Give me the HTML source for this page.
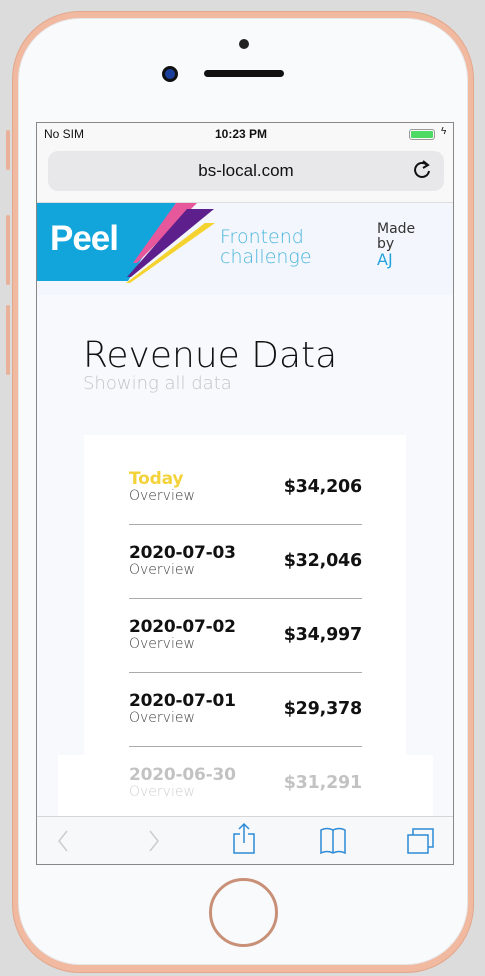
<!DOCTYPE html>
<html><head><meta charset="utf-8"><style>
*{margin:0;padding:0;box-sizing:border-box}
body{width:485px;height:976px;background:#dcdcdc;position:relative;overflow:hidden;font-family:"Liberation Sans",sans-serif}
.phone{position:absolute;left:12px;top:11px;width:462px;height:962px;border-radius:68px;background:#f0b9a0;border:1px solid #e2a88e}
.inner{position:absolute;left:5px;top:6px;right:5px;bottom:7px;border-radius:62px;background:#f9fafc;border:1px solid #e6e7ea}
.btn{position:absolute;left:6px;width:4px;background:#eab19a;border-radius:2px}
.abs{position:absolute}
.screen{position:absolute;left:36px;top:122px;width:418px;height:743px;background:#f8f9fd;border:1px solid #888;overflow:hidden}
.row{position:absolute;left:92px;width:233px}
.d{position:absolute;left:0;font-weight:bold;font-size:17px;color:#111;font-family:"DejaVu Sans",sans-serif;letter-spacing:-0.2px}
.o{position:absolute;left:0;font-size:14px;color:#444;font-family:"DejaVu Sans",sans-serif;font-weight:300}
.a{position:absolute;right:0;font-weight:bold;font-size:17.5px;color:#111;font-family:"DejaVu Sans",sans-serif;letter-spacing:-0.2px}
.ln{position:absolute;left:0;width:233px;height:1px;background:#aaa}
</style></head><body>
<div class="btn" style="top:130px;height:40px"></div>
<div class="btn" style="top:215px;height:70px"></div>
<div class="btn" style="top:305px;height:70px"></div>
<div class="phone"><div class="inner"></div></div>
<div class="abs" style="left:239px;top:39px;width:10px;height:10px;border-radius:50%;background:#222"></div>
<div class="abs" style="left:162px;top:66px;width:16px;height:16px;border-radius:50%;background:#1a3f9a;border:3px solid #111"></div>
<div class="abs" style="left:204px;top:70px;width:80px;height:7px;border-radius:4px;background:#111"></div>
<div class="screen">
 <div class="abs" style="left:0;top:0;width:418px;height:80px;background:#f8f8f8;border-bottom:1px solid #ddd"></div>
 <div class="abs" style="left:7px;top:4px;font-size:12px;color:#111">No SIM</div>
 <div class="abs" style="left:178px;top:4px;font-size:12px;font-weight:bold;color:#111">10:23 PM</div>
 <div class="abs" style="left:372px;top:6px;width:26px;height:11px;border:1px solid #999;border-radius:3px;padding:1px"><div style="width:100%;height:100%;background:#4cd964;border-radius:1px"></div></div>
 <div class="abs" style="left:404px;top:3px;font-size:10px;color:#111">ϟ</div>
 <div class="abs" style="left:11px;top:28px;width:396px;height:40px;background:#e8e8ea;border-radius:10px"></div>
 <div class="abs" style="left:0;top:38px;width:418px;text-align:center;font-size:17px;color:#111">bs-local.com</div>
 <svg class="abs" style="left:377px;top:37px" width="18" height="20" viewBox="0 0 18 20"><path d="M13 5A7 7 0 1 0 15 11" fill="none" stroke="#111" stroke-width="2"/><path d="M9 1L14 5L9 8" fill="none" stroke="#111" stroke-width="2"/></svg>
 <div class="abs" style="left:0;top:80px;width:418px;height:92px;background:#f3f6fc"></div>
 <svg class="abs" style="left:0;top:80px" width="180" height="82" viewBox="0 0 180 82">
  <polygon points="0,0 139,0 91,78 0,78" fill="#12a5dc"/>
  <polygon points="139,0 160,0 100,60 96,60" fill="#e6579c"/>
  <polygon points="150,6 177,6 94,74 90,74" fill="#5c1f8c"/>
  <polygon points="168,20 178,20 93,80 89,80" fill="#f4d32f"/>
 </svg>
 <div class="abs" style="left:13px;top:96px;font-size:35px;font-weight:bold;color:#fff;font-family:'Liberation Sans',sans-serif;letter-spacing:-1px">Peel</div>
 <div class="abs" style="left:183px;top:104px;font-size:19px;line-height:20px;color:#4bb7dc;font-family:'DejaVu Sans',sans-serif;font-weight:200">Frontend<br>challenge</div>
 <div class="abs" style="left:340px;top:99px;font-size:14px;line-height:15px;color:#333;font-family:'DejaVu Sans',sans-serif">Made<br>by<br><span style="color:#23a3dc;font-size:16px">AJ</span></div>
 <div class="abs" style="left:46px;top:212px;font-size:36px;color:#111;font-family:'DejaVu Sans',sans-serif;font-weight:200;letter-spacing:0">Revenue Data</div>
 <div class="abs" style="left:46px;top:250px;font-size:18px;color:#c2c2c8;font-family:'DejaVu Sans',sans-serif;font-weight:200">Showing all data</div>
 <div class="abs" style="left:47px;top:312px;width:322px;height:440px;background:#fff"></div>
 <div class="row" style="top:346px">
  <div class="d" style="top:0;color:#f3d23a">Today</div><div class="o" style="top:19px">Overview</div><div class="a" style="top:8px">$34,206</div>
  <div class="ln" style="top:55px"></div></div>
 <div class="row" style="top:420px">
  <div class="d" style="top:0">2020-07-03</div><div class="o" style="top:19px">Overview</div><div class="a" style="top:8px">$32,046</div>
  <div class="ln" style="top:55px"></div></div>
 <div class="row" style="top:494px">
  <div class="d" style="top:0">2020-07-02</div><div class="o" style="top:19px">Overview</div><div class="a" style="top:8px">$34,997</div>
  <div class="ln" style="top:55px"></div></div>
 <div class="row" style="top:568px">
  <div class="d" style="top:0">2020-07-01</div><div class="o" style="top:19px">Overview</div><div class="a" style="top:8px">$29,378</div>
  <div class="ln" style="top:55px"></div></div>
 <div class="abs" style="left:21px;top:632px;width:375px;height:62px;background:#fff"></div>
 <div class="row" style="top:642px;opacity:0.25">
  <div class="d" style="top:0">2020-06-30</div><div class="o" style="top:19px">Overview</div><div class="a" style="top:8px">$31,291</div></div>
 <div class="abs" style="left:0;top:693px;width:418px;height:50px;background:#f7f8fa;border-top:1px solid #d6d6d6"></div>
 <svg class="abs" style="left:0;top:694px" width="418" height="48" viewBox="0 0 418 48">
  <path d="M30 14L22 24L30 34" fill="none" stroke="#ccc" stroke-width="1.5"/>
  <path d="M113 14L121 24L113 34" fill="none" stroke="#ccc" stroke-width="1.5"/>
  <g fill="none" stroke="#2d8ad6" stroke-width="1.5"><path d="M203 17H197V36H217V17H211M207 26V7M202 12L207 7L212 12"/>
  <path d="M284 36V13Q290 10 296 13Q302 10 308 13V36Q302 33 296 36Q290 33 284 36ZM296 13V36"/>
  <rect x="371" y="18" width="20" height="18"/><path d="M376 18V12H396V30H391"/></g>
 </svg>
</div>
<div class="abs" style="left:209px;top:878px;width:69px;height:69px;border-radius:50%;border:3px solid #c99078"></div>
</body></html>
